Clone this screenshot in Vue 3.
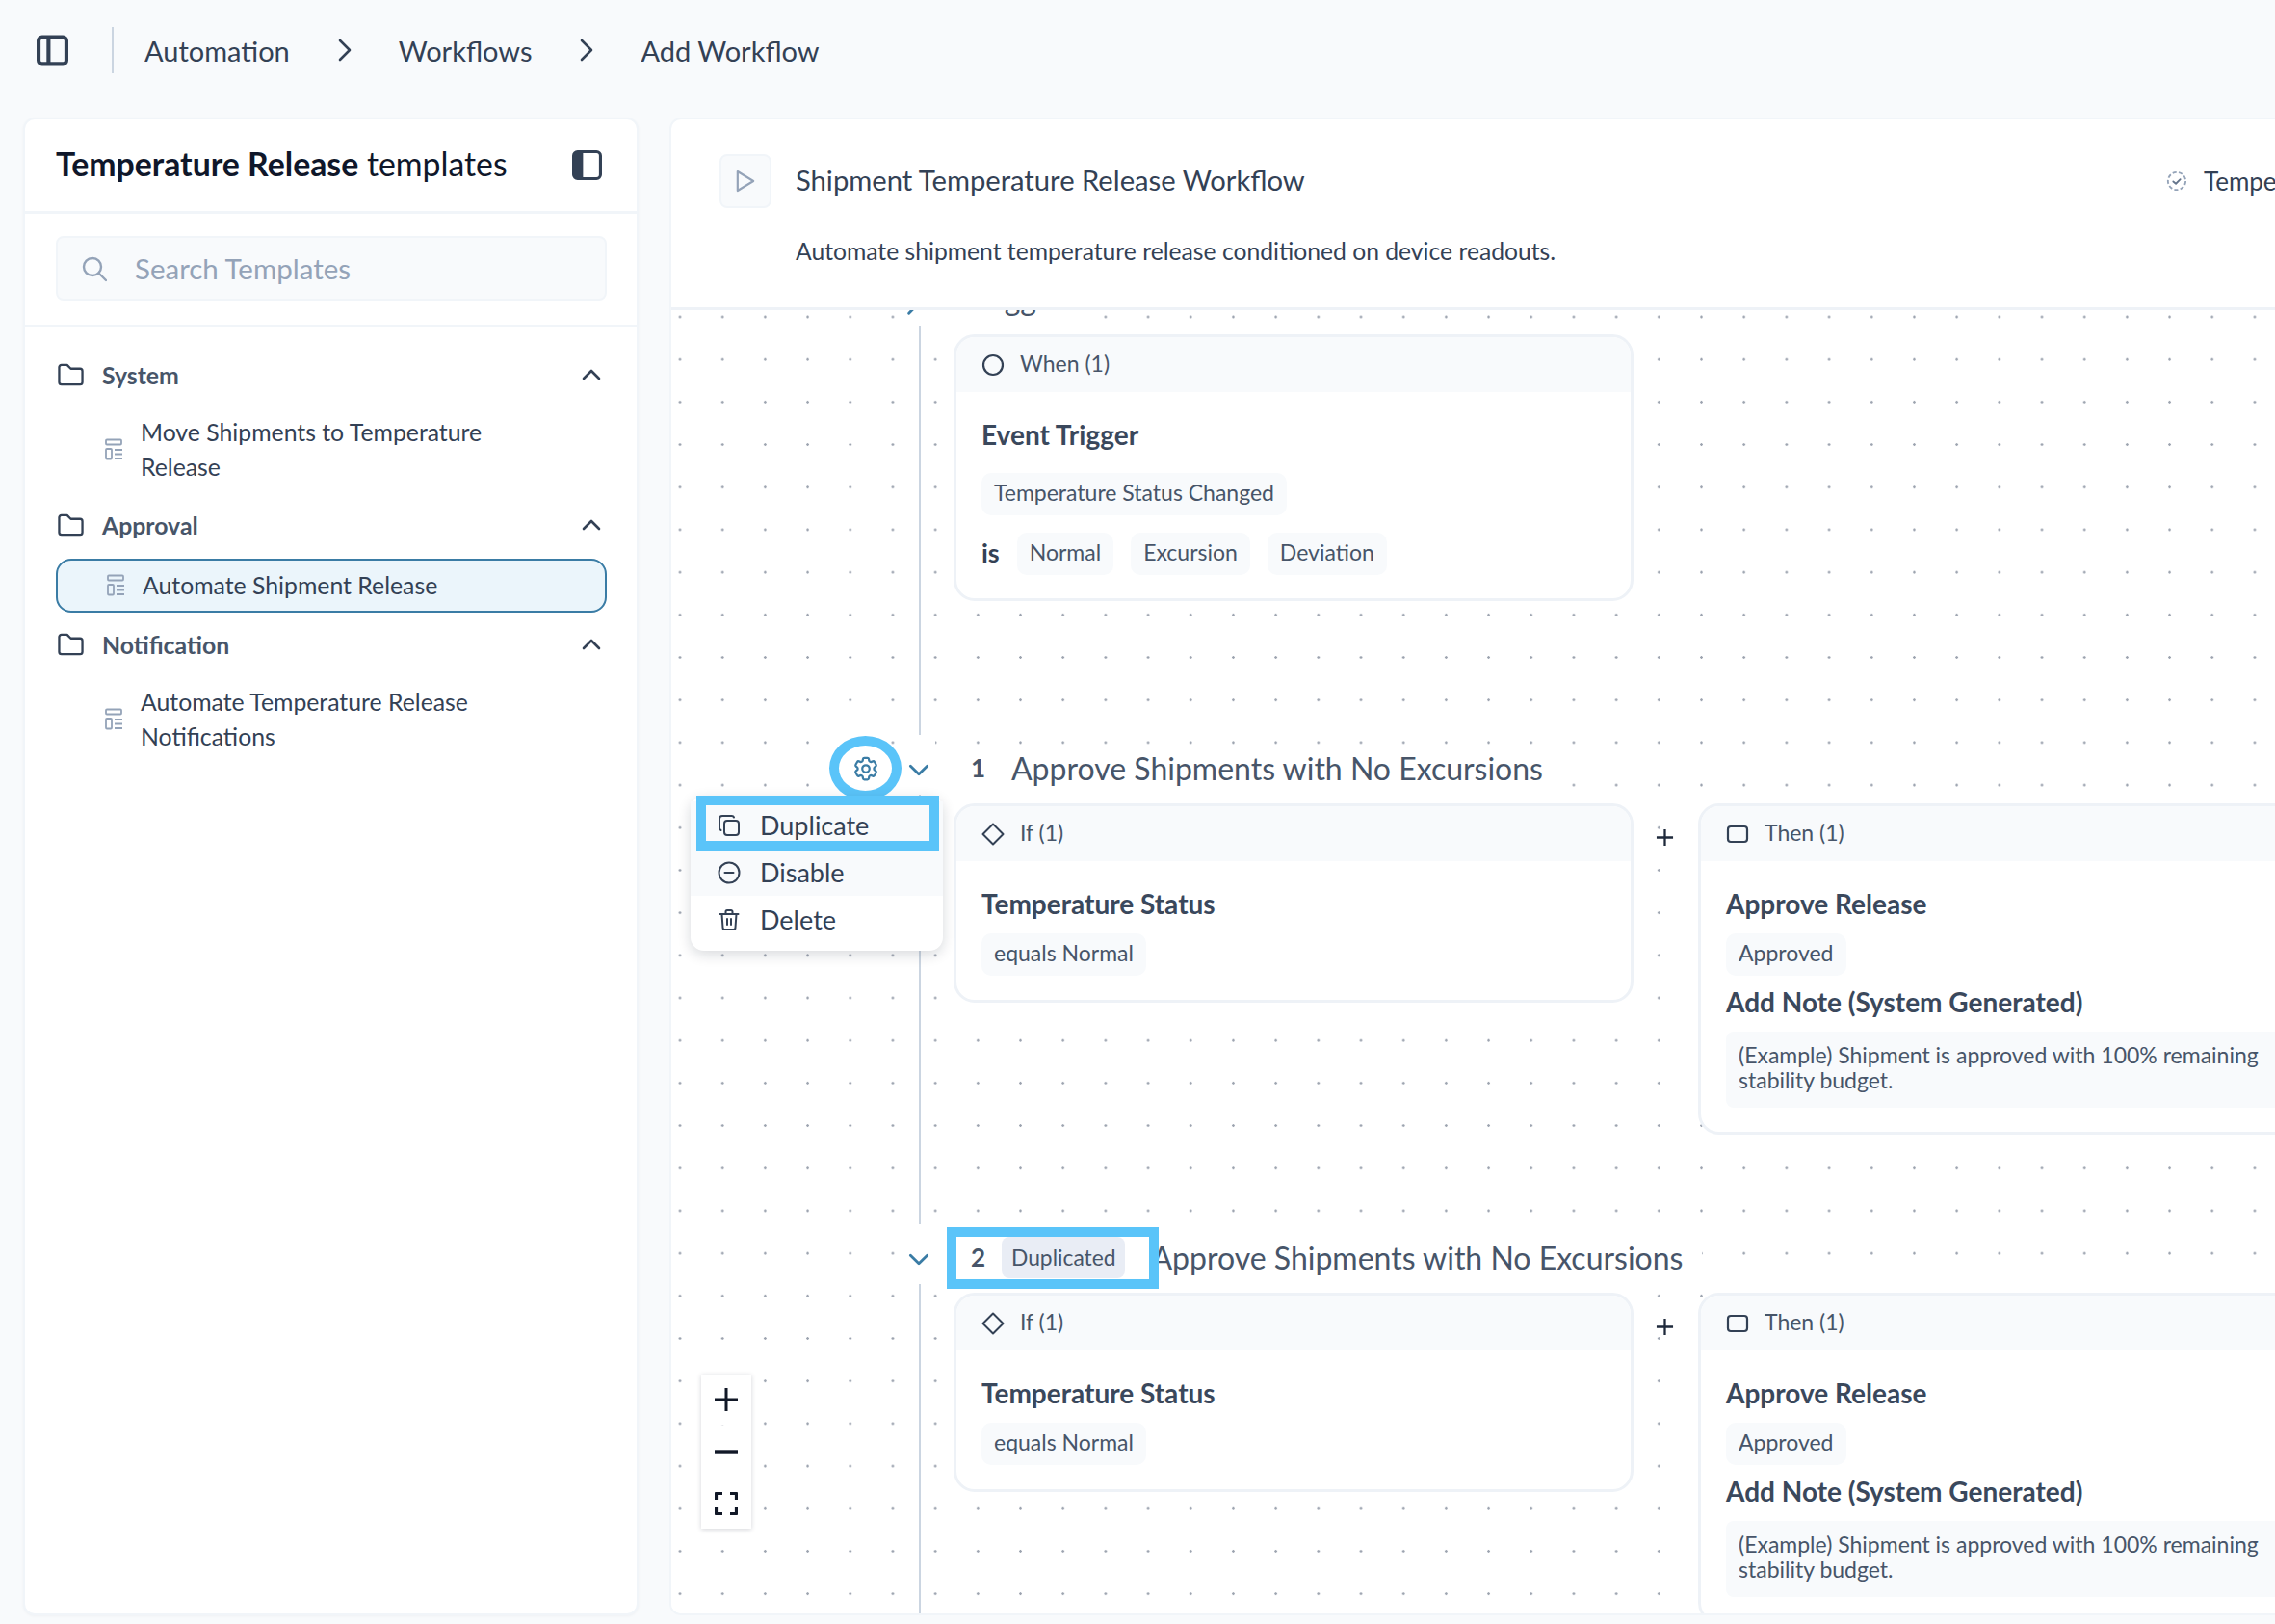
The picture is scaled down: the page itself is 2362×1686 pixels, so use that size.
<template>
  <div class="page">
    <header class="topbar">
      <svg class="tb-toggle" viewBox="0 0 32 32" fill="none" stroke="#334155" stroke-width="4">
        <rect x="2" y="2.500" width="28" height="27" rx="3.500" />
        <path d="M12 3v26" />
      </svg>
      <span class="tb-divider"></span>
      <template v-for="(crumb, i) in crumbs" :key="crumb">
        <span class="crumb">{{ crumb }}</span>
        <svg v-if="i < crumbs.length - 1" class="crumb-sep" viewBox="0 0 14 24" fill="none" stroke="#334155" stroke-width="2.600" stroke-linecap="round" stroke-linejoin="round">
          <path d="M2 2l10 10L2 22" />
        </svg>
      </template>
    </header>

    <div class="content">
      <aside class="sidebar">
        <div class="side-head">
          <h2 class="side-title"><b>Temperature Release</b> templates</h2>
          <svg class="side-toggle" viewBox="0 0 30 30" fill="none">
            <rect x="1.500" y="1.500" width="27" height="27" rx="4" stroke="#334155" stroke-width="3" />
            <path d="M5 1.500h6v27H5a3.500 3.500 0 0 1-3.500-3.500V5A3.500 3.500 0 0 1 5 1.500z" fill="#334155" />
          </svg>
        </div>
        <div class="side-search">
          <div class="search-box">
            <svg class="search-icon" viewBox="0 0 26 26" fill="none" stroke="#94a3b8" stroke-width="2.400" stroke-linecap="round">
              <circle cx="11" cy="11" r="9" />
              <path d="M17.500 17.500L25 25" />
            </svg>
            <span class="search-text">Search Templates</span>
          </div>
        </div>
        <div class="tree">
          <div v-for="group in groups" :key="group.name" class="group">
            <div class="group-row">
              <svg class="folder" viewBox="0 0 28 24" fill="none" stroke="#334155" stroke-width="2.400" stroke-linejoin="round">
                <path d="M1.500 20V4a2.500 2.500 0 0 1 2.500-2.500h6l4 4h10A2.500 2.500 0 0 1 26.500 8v12a2.500 2.500 0 0 1-2.500 2.500H4A2.500 2.500 0 0 1 1.500 20z" />
              </svg>
              <span class="group-name">{{ group.name }}</span>
              <svg class="group-chev" viewBox="0 0 20 12" fill="none" stroke="#334155" stroke-width="2.600" stroke-linecap="round" stroke-linejoin="round">
                <path d="M2 10l8-8 8 8" />
              </svg>
            </div>
            <div class="item" :class="{ selected: group.selected }">
              <svg class="item-icon" viewBox="0 0 18 24" fill="none" stroke="#94a3b8" stroke-width="1.800">
                <rect x="1" y="1.500" width="16" height="5" rx="1" />
                <rect x="1" y="11" width="6" height="10.500" rx="1" />
                <path d="M10 12h8M10 16.500h8M10 21h8" />
              </svg>
              <span class="item-text">{{ group.item }}</span>
            </div>
          </div>
        </div>
      </aside>

      <main class="workflow">
        <div class="wf-head">
          <div class="wf-top">
            <div class="play-btn">
              <svg viewBox="0 0 22 26" fill="none" stroke="#94a3b8" stroke-width="2.400" stroke-linejoin="round">
                <path d="M2 2l18 11L2 24z" />
              </svg>
            </div>
            <div class="wf-title">Shipment Temperature Release Workflow</div>
            <div class="wf-status">
              <svg viewBox="0 0 24 24" fill="none" stroke="#94a3b8" stroke-width="2">
                <circle cx="12" cy="12" r="10" stroke-dasharray="4.500 2.500" />
                <path d="M8 12.500l3 2.500 5-5" stroke="#64748b" stroke-linecap="round" stroke-linejoin="round" />
              </svg>
              <span>Temperature Release</span>
            </div>
          </div>
          <p class="wf-desc">Automate shipment temperature release conditioned on device readouts.</p>
        </div>

        <div class="canvas">
          <div class="flow">
            <section class="sec sec-trigger">
              <div class="chev-box">
                <svg class="chev" viewBox="0 0 20 12" fill="none" stroke="#3a7ca5" stroke-width="2.600" stroke-linecap="round" stroke-linejoin="round">
                  <path d="M2 2l8 8 8-8" />
                </svg>
              </div>
              <div class="sec-head"><div class="sec-line"><span class="sec-title">Trigger</span></div></div>
              <div class="card when-card">
                <div class="card-head">
                  <svg viewBox="0 0 24 24" fill="none" stroke="#334155" stroke-width="2.200"><circle cx="12" cy="12" r="10" /></svg>
                  <span>When (1)</span>
                </div>
                <div class="card-body">
                  <div class="card-title when-title">Event Trigger</div>
                  <span class="chip">Temperature Status Changed</span>
                  <div class="is-row">
                    <b class="is-label">is</b>
                    <span v-for="s in statuses" :key="s" class="chip">{{ s }}</span>
                  </div>
                </div>
              </div>
            </section>

            <section v-for="rule in rules" :key="rule.num" class="sec" :class="'sec-' + rule.num">
              <div class="chev-box">
                <svg class="chev" viewBox="0 0 20 12" fill="none" stroke="#3a7ca5" stroke-width="2.600" stroke-linecap="round" stroke-linejoin="round">
                  <path d="M2 2l8 8 8-8" />
                </svg>
              </div>

              <template v-if="rule.num === 1">
                <div class="gear-ring">
                  <svg viewBox="0 0 24 24" fill="none" stroke="#3a7ca5" stroke-width="1.800" stroke-linecap="round" stroke-linejoin="round">
                    <path d="M9.594 3.940c.090-.542.560-.940 1.110-.940h2.593c.550 0 1.020.398 1.110.940l.213 1.281c.063.374.313.686.645.870.074.040.147.083.220.127.325.196.720.257 1.075.124l1.217-.456a1.125 1.125 0 0 1 1.370.490l1.296 2.247a1.125 1.125 0 0 1-.260 1.431l-1.003.827c-.293.241-.438.613-.430.992a7.723 7.723 0 0 1 0 .255c-.008.378.137.750.430.991l1.004.827c.424.350.534.955.260 1.430l-1.298 2.247a1.125 1.125 0 0 1-1.369.491l-1.217-.456c-.355-.133-.750-.072-1.076.124a6.470 6.470 0 0 1-.220.128c-.331.183-.581.495-.644.869l-.213 1.281c-.090.543-.560.940-1.110.940h-2.594c-.550 0-1.019-.398-1.110-.940l-.213-1.281c-.062-.374-.312-.686-.644-.870a6.520 6.520 0 0 1-.220-.127c-.325-.196-.720-.257-1.076-.124l-1.217.456a1.125 1.125 0 0 1-1.369-.490l-1.297-2.247a1.125 1.125 0 0 1 .260-1.431l1.004-.827c.292-.240.437-.613.430-.991a6.932 6.932 0 0 1 0-.255c.007-.380-.138-.751-.430-.992l-1.004-.827a1.125 1.125 0 0 1-.260-1.430l1.297-2.247a1.125 1.125 0 0 1 1.370-.491l1.216.456c.356.133.751.072 1.076-.124.072-.044.146-.086.220-.128.332-.183.582-.495.644-.869l.214-1.280Z" />
                    <circle cx="12" cy="12" r="3" />
                  </svg>
                </div>
                <div class="menu">
                  <div class="menu-row menu-dup">
                    <svg viewBox="0 0 24 24" fill="none" stroke="#334155" stroke-width="2" stroke-linecap="round" stroke-linejoin="round">
                      <rect x="7" y="7" width="15" height="15" rx="3" />
                      <path d="M3.500 17A2.500 2.500 0 0 1 2 14.800V5a3 3 0 0 1 3-3h9.800A2.500 2.500 0 0 1 17 3.500" />
                    </svg>
                    <span>Duplicate</span>
                  </div>
                  <div class="menu-row menu-hover">
                    <svg viewBox="0 0 24 24" fill="none" stroke="#334155" stroke-width="2" stroke-linecap="round">
                      <circle cx="12" cy="12" r="10.500" />
                      <path d="M7.500 12h9" />
                    </svg>
                    <span>Disable</span>
                  </div>
                  <div class="menu-row">
                    <svg viewBox="0 0 24 24" fill="none" stroke="#334155" stroke-width="2" stroke-linecap="round" stroke-linejoin="round">
                      <path d="M2.500 6h19M8.500 6V3.500a1.500 1.500 0 0 1 1.500-1.500h4a1.500 1.500 0 0 1 1.500 1.500V6M4.500 6l1 14a2 2 0 0 0 2 2h9a2 2 0 0 0 2-2l1-14M10 11v6M14 11v6" />
                    </svg>
                    <span>Delete</span>
                  </div>
                  <div class="menu-mark"></div>
                </div>
              </template>
              <div v-else class="dup-mark"></div>

              <div class="sec-head">
                <div class="sec-line">
                  <b class="sec-num">{{ rule.num }}</b>
                  <span v-if="rule.badge" class="badge">{{ rule.badge }}</span>
                  <span class="sec-title">Approve Shipments with No Excursions</span>
                </div>
              </div>

              <div class="cards">
                <div class="card if-card">
                  <div class="card-head">
                    <svg viewBox="0 0 24 24" fill="none" stroke="#334155" stroke-width="2" stroke-linejoin="round">
                      <path d="M12 1.500L22.500 12 12 22.500 1.500 12z" />
                    </svg>
                    <span>If (1)</span>
                  </div>
                  <div class="card-body">
                    <div class="card-title">Temperature Status</div>
                    <span class="chip">equals Normal</span>
                  </div>
                </div>
                <div class="plus-col">
                  <svg viewBox="0 0 20 20" fill="none" stroke="#1e293b" stroke-width="2.400">
                    <path d="M10 1v18M1 10h18" />
                  </svg>
                </div>
                <div class="card then-card">
                  <div class="card-head">
                    <svg viewBox="0 0 24 24" fill="none" stroke="#334155" stroke-width="2.200">
                      <rect x="2" y="4" width="20" height="16" rx="3" />
                    </svg>
                    <span>Then (1)</span>
                  </div>
                  <div class="card-body">
                    <div class="card-title">Approve Release</div>
                    <span class="chip">Approved</span>
                    <div class="card-title note-title">Add Note (System Generated)</div>
                    <div class="note">(Example) Shipment is approved with 100% remaining stability budget.</div>
                  </div>
                </div>
              </div>
            </section>
          </div>

          <div class="zoom-ctl">
            <button class="zoom-btn">
              <svg viewBox="0 0 24 24" fill="none" stroke="#111827" stroke-width="3"><path d="M12 0v24M0 12h24" /></svg>
            </button>
            <button class="zoom-btn">
              <svg viewBox="0 0 24 24" fill="none" stroke="#111827" stroke-width="3.400"><path d="M0 12h24" /></svg>
            </button>
            <button class="zoom-btn">
              <svg viewBox="0 0 24 24" fill="none" stroke="#111827" stroke-width="3.200" stroke-linejoin="round">
                <path d="M1.500 8V1.500H8M16 1.500h6.500V8M22.500 16v6.500H16M8 22.500H1.500V16" />
              </svg>
            </button>
          </div>
        </div>
      </main>
    </div>
  </div>
</template>

<script setup>
const crumbs = ['Automation', 'Workflows', 'Add Workflow']

const groups = [
  { name: 'System', item: 'Move Shipments to Temperature Release' },
  { name: 'Approval', item: 'Automate Shipment Release', selected: true },
  { name: 'Notification', item: 'Automate Temperature Release Notifications' },
]

const statuses = ['Normal', 'Excursion', 'Deviation']

const rules = [
  { num: 1 },
  { num: 2, badge: 'Duplicated' },
]
</script>

<style>
html,
body {
  margin: 0;
  background: #f8fafc;
}
</style>

<style scoped>
.page {
  width: 2362px;
  height: 1686px;
  overflow: hidden;
  background: #f8fafc;
  font-family: Lato, "Noto Sans", sans-serif;
  color: #334155;
}

.topbar {
  height: 122px;
  padding-left: 38px;
  box-sizing: border-box;
  display: flex;
  align-items: center;
  padding-bottom: 18px;
}
.tb-toggle {
  width: 33px;
  height: 33px;
}
.tb-divider {
  width: 2px;
  height: 48px;
  background: #cbd5e1;
  margin: 0 32px 0 45px;
}
.crumb {
  font-size: 29px;
}
.crumb-sep {
  width: 14px;
  height: 24px;
  margin: 0 49px 0 50px;
}

.content {
  display: flex;
  gap: 32px;
  padding-left: 24px;
  height: 1555px;
}

.sidebar {
  width: 639px;
  flex-shrink: 0;
  box-sizing: border-box;
  background: #fff;
  border: 2px solid #f1f5f9;
  border-radius: 12px;
  box-shadow: 0 1px 3px rgba(15, 23, 42, 0.04);
}
.side-head {
  height: 98px;
  box-sizing: border-box;
  border-bottom: 3px solid #f1f5f9;
  padding: 0 36px 0 32px;
  display: flex;
  align-items: center;
  justify-content: space-between;
}
.side-title {
  margin: 0 0 3px;
  font-size: 33.800px;
  font-weight: 400;
  color: #0f172a;
}
.side-title b {
  font-weight: 700;
}
.side-toggle {
  width: 31px;
  height: 31px;
}
.side-search {
  height: 118px;
  box-sizing: border-box;
  border-bottom: 3px solid #f1f5f9;
  padding: 23px 31px 0 32px;
}
.search-box {
  height: 67px;
  box-sizing: border-box;
  background: #f8fafc;
  border: 2px solid #f1f5f9;
  border-radius: 8px;
  display: flex;
  align-items: center;
  padding-left: 25px;
}
.search-icon {
  width: 26px;
  height: 28px;
}
.search-text {
  font-size: 29.500px;
  color: #94a3b8;
  margin-left: 29px;
}

.tree {
  padding: 31px 31px 0 32px;
  display: flex;
  flex-direction: column;
  gap: 16px;
}
.group-row {
  height: 36px;
  display: flex;
  align-items: center;
}
.folder {
  width: 27px;
  height: 24px;
  margin-left: 2px;
}
.group-name {
  font-size: 24.800px;
  font-weight: 700;
  margin-left: 19px;
  color: #475569;
}
.group-chev {
  width: 20px;
  height: 12px;
  margin-left: auto;
  margin-right: 6px;
}
.item {
  margin-top: 16px;
  padding: 8px 0 8px 51px;
  display: flex;
  align-items: center;
  gap: 19px;
  font-size: 24.800px;
  line-height: 36px;
}
.item-icon {
  width: 18px;
  height: 24px;
  flex-shrink: 0;
}
.item-text {
  max-width: 376px;
}
.item.selected {
  margin-top: 17px;
  margin-bottom: -1px;
  border: 2px solid #3a7ca5;
  border-radius: 16px;
  background: #ebf5fb;
}

.workflow {
  width: 1900px;
  flex-shrink: 0;
  background: #fff;
  border: 2px solid #f1f5f9;
  border-radius: 12px;
  display: flex;
  flex-direction: column;
  box-sizing: border-box;
  overflow: hidden;
}
.wf-head {
  height: 198px;
  flex-shrink: 0;
  box-sizing: border-box;
  border-bottom: 3px solid #eef2f7;
  padding: 36px 0 0 50px;
}
.wf-top {
  display: flex;
  align-items: center;
}
.play-btn {
  width: 54px;
  height: 56px;
  box-sizing: border-box;
  background: #f8fafc;
  border: 2px solid #f1f5f9;
  border-radius: 8px;
  display: flex;
  align-items: center;
  justify-content: center;
}
.play-btn svg {
  width: 20px;
  height: 24px;
}
.wf-title {
  font-size: 29.200px;
  margin-left: 25px;
  margin-bottom: 4px;
  width: 1423px;
  flex-shrink: 0;
}
.wf-status {
  display: flex;
  align-items: center;
  gap: 17px;
  font-size: 26px;
  white-space: nowrap;
}
.wf-status svg {
  width: 22px;
  height: 22px;
}
.wf-desc {
  margin: 27px 0 0 79px;
  font-size: 24.700px;
  line-height: 36px;
}

.canvas {
  position: relative;
  flex: 1;
  overflow: hidden;
  background-color: #fff;
  background-image: radial-gradient(circle, #9ca3af 1.100px, transparent 1.500px);
  background-size: 44.200px 44.200px;
  background-position: -13.100px -15.100px;
}
.flow {
  margin-top: -46px;
  margin-left: 257px;
}

.sec {
  position: relative;
  border-left: 2px solid #cbd5e1;
  padding-left: 34px;
}
.sec-trigger {
  padding-bottom: 139px;
}
.sec-1 {
  padding-bottom: 93px;
}
.sec-2 {
  padding-bottom: 20px;
}

.chev-box {
  position: absolute;
  left: -19px;
  top: 0;
  width: 34px;
  height: 62px;
  background: #fff;
  display: flex;
  align-items: center;
  justify-content: center;
  padding-top: 10px;
  box-sizing: border-box;
}
.chev {
  width: 22px;
  height: 13px;
}
.sec-trigger .chev {
  transform: translate(-6px, 4px) rotate(-90deg);
}

.sec-head {
  height: 62px;
  display: flex;
  align-items: flex-end;
  margin-bottom: 9px;
}
.sec-line {
  height: 50px;
  margin-left: -20px;
  padding: 0 20px 6px 38px;
  box-sizing: border-box;
  background: #fff;
  display: flex;
  align-items: center;
}
.sec-trigger .sec-line {
  padding-bottom: 8px;
}
.sec-num {
  font-size: 26px;
  color: #475569;
  width: 42px;
}
.sec-2 .sec-num {
  width: 32px;
}
.sec-title {
  font-size: 32px;
  color: #475569;
  white-space: nowrap;
}
.badge {
  height: 43px;
  line-height: 43px;
  padding: 0 10px;
  border-radius: 8px;
  background: #e9edf5;
  font-size: 22.800px;
  color: #475569;
  margin-right: 27px;
  white-space: nowrap;
}

.cards {
  display: flex;
  align-items: flex-start;
}
.card {
  width: 706px;
  flex-shrink: 0;
  box-sizing: border-box;
  background: #fff;
  border: 3px solid #eef2f7;
  border-radius: 22px;
  overflow: hidden;
}
.card-head {
  height: 57px;
  background: #f8fafc;
  padding-left: 26px;
  display: flex;
  align-items: center;
  gap: 16px;
  font-size: 23px;
  color: #475569;
}
.card-head span {
  margin-top: -3px;
}
.card-head svg {
  width: 24px;
  height: 24px;
}
.card-body {
  padding: 26px 26px 25px;
}
.when-card .card-body {
  padding-bottom: 24px;
}
.card-title {
  font-size: 28px;
  font-weight: 700;
  line-height: 36px;
  margin-bottom: 13px;
  color: #3a485c;
}
.when-title {
  margin-bottom: 22px;
}
.note-title {
  margin-top: 9px;
  margin-bottom: 13px;
}
.chip {
  display: inline-block;
  height: 44px;
  line-height: 41px;
  padding: 0 13px;
  background: #f8fafc;
  border-radius: 10px;
  font-size: 23px;
  color: #475569;
  vertical-align: top;
}
.is-row {
  display: flex;
  align-items: center;
  gap: 18px;
  margin-top: 18px;
}
.is-label {
  font-size: 27px;
  margin-top: -3px;
}
.plus-col {
  width: 67px;
  flex-shrink: 0;
  padding: 26px 2px 0 0;
  box-sizing: border-box;
  display: flex;
  justify-content: center;
}
.plus-col svg {
  width: 19px;
  height: 19px;
}
.note {
  background: #f8fafc;
  border-radius: 8px;
  padding: 11px 70px 13px 13px;
  font-size: 23px;
  line-height: 26px;
  color: #475569;
  min-height: 79px;
  box-sizing: border-box;
}

.gear-ring {
  position: absolute;
  left: -95px;
  top: 1px;
  width: 75px;
  height: 67px;
  box-sizing: border-box;
  border: 10px solid #5ac4f9;
  border-radius: 50%;
  background: #fff;
  display: flex;
  align-items: center;
  justify-content: center;
}
.gear-ring svg {
  width: 30px;
  height: 30px;
}
.menu {
  position: absolute;
  left: -239px;
  top: 63px;
  width: 262px;
  z-index: 3;
  box-sizing: border-box;
  background: #fff;
  border-radius: 14px;
  padding: 6px 0 8px;
  box-shadow: 0 4px 14px rgba(15, 23, 42, 0.16);
}
.menu-row {
  height: 49px;
  display: flex;
  align-items: center;
  gap: 20px;
  padding-left: 28px;
  font-size: 27px;
  color: #334155;
}
.menu-row svg {
  width: 24px;
  height: 24px;
}
.menu-dup,
.menu-hover {
  background: #f8fafc;
}
.menu-mark {
  position: absolute;
  left: 6px;
  top: 0;
  width: 252px;
  height: 57px;
  box-sizing: border-box;
  border: 10px solid #5ac4f9;
}
.dup-mark {
  position: absolute;
  left: 27px;
  top: 3px;
  width: 220px;
  height: 64px;
  box-sizing: border-box;
  border: 10px solid #5ac4f9;
  z-index: 2;
}

.zoom-ctl {
  position: absolute;
  left: 31px;
  bottom: 88px;
  display: flex;
  flex-direction: column;
  gap: 2px;
  box-shadow: 0 1px 5px rgba(15, 23, 42, 0.18);
}
.zoom-btn {
  width: 52px;
  height: 52px;
  border: 0;
  padding: 0;
  background: #fff;
  display: flex;
  align-items: center;
  justify-content: center;
}
.zoom-btn svg {
  width: 24px;
  height: 24px;
}
</style>
